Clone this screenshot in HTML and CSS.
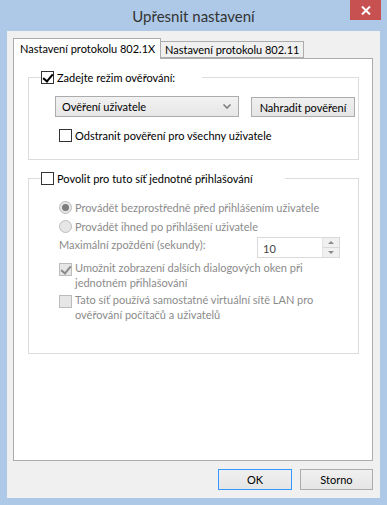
FILE: index.html
```html
<!DOCTYPE html>
<html lang="cs">
<head>
  <meta charset="UTF-8" />
  <title>Upřesnit nastavení</title>
  <link rel="stylesheet" href="styles.css">
</head>
<body>

  <div class="window">
    <div class="titlebar">
      <div class="title">Upřesnit nastavení</div>
      <button class="close-btn" title="Zavřít">
        <svg width="10" height="9" viewBox="0 0 10 9"><path d="M1 0.5 L9 8.5 M9 0.5 L1 8.5" stroke="#fff" stroke-width="2"/></svg>
      </button>
    </div>

    <div class="client">
      <div class="tabs">
        <div class="tab active">Nastavení protokolu 802.1X</div>
        <div class="tab">Nastavení protokolu 802.11</div>
      </div>

      <div class="panel">
        <fieldset class="group">
          <legend class="gap-1">
            <span class="check checked"></span>Zadejte režim ověřování:
          </legend>
          <div class="select-row">
            <div class="select">
              Ověření uživatele
              <svg class="chevron" width="8" height="5" viewBox="0 0 8 5"><path d="M0.5 0.5 L4 4 L7.5 0.5" stroke="#7a7a7a" stroke-width="1.5" fill="none"/></svg>
            </div>
            <button class="btn replace-btn">Nahradit pověření</button>
          </div>
          <div class="option after-select">
            <span class="check"></span>Odstranit pověření pro všechny uživatele
          </div>
        </fieldset>

        <fieldset class="group second">
          <legend class="gap-2">
            <span class="check"></span>Povolit pro tuto síť jednotné přihlašování
          </legend>
          <div class="option disabled first">
            <span class="radio selected"></span>Provádět bezprostředně před přihlášením uživatele
          </div>
          <div class="option disabled">
            <span class="radio"></span>Provádět ihned po přihlášení uživatele
          </div>
          <div class="delay-row disabled">
            <span class="delay-label">Maximální zpoždění (sekundy):</span>
            <div class="spinbox">
              <span class="spin-value">10</span>
              <div class="spin-btns">
                <span class="spin up"></span>
                <span class="spin down"></span>
              </div>
            </div>
          </div>
          <div class="option disabled multi">
            <span class="check checked"></span>
            <span>Umožnit zobrazení dalších dialogových oken při<br>jednotném přihlašování</span>
          </div>
          <div class="option disabled multi">
            <span class="check"></span>
            <span>Tato síť používá samostatné virtuální sítě LAN pro<br>ověřování počítačů a uživatelů</span>
          </div>
        </fieldset>
      </div>

      <div class="actions">
        <button class="btn default">OK</button>
        <button class="btn">Storno</button>
      </div>
    </div>
  </div>

</body>
</html>
```
FILE: styles.css
```css
* {
  box-sizing: border-box;
}

body {
  margin: 0;
  font-family: Lato, 'Noto Sans', sans-serif;
  font-size: 11px;
  color: #000;
  background: #adc9e7;
}

.window {
  width: 387px;
  height: 505px;
  display: flex;
  flex-direction: column;
}

.titlebar {
  height: 31px;
  display: grid;
  grid-template-columns: 1fr auto 1fr;
}

.title {
  grid-column: 2;
  font-size: 15px;
  color: #333;
  line-height: 31px;
  padding-top: 1px;
}

.close-btn {
  grid-column: 3;
  justify-self: end;
  align-self: start;
  width: 31px;
  height: 20px;
  margin-right: 6px;
  border: none;
  padding: 0;
  background: #c75050;
  display: flex;
  justify-content: center;
  align-items: center;
}

.client {
  height: 467px;
  margin: 0 7px;
  background: #f0f0f0;
  padding: 7px 7px 8px 6px;
  display: flex;
  flex-direction: column;
}

/* tabs */

.tabs {
  display: flex;
  align-items: flex-start;
  height: 20px;
  position: relative;
  z-index: 1;
}

.tab {
  height: 17px;
  margin-top: 3px;
  padding: 0 4px;
  line-height: 16px;
  background: #f0f0f0;
  border: 1px solid #acacac;
  border-left: none;
  white-space: nowrap;
}

.tab.active {
  height: 21px;
  margin-top: 0;
  width: 148px;
  padding: 0 6px;
  line-height: 20px;
  background: #fff;
  border-left: 1px solid #acacac;
  border-bottom: none;
}

.panel {
  flex: 1;
  background: #fff;
  border: 1px solid #acacac;
  padding: 0 13px 0 14px;
}

/* group boxes */

.group {
  margin: 11px 0 0;
  padding: 0 0 16px 26px;
  border: 1px solid #dcdcdc;
  min-width: 0;
}

.group.second {
  margin-top: 11px;
  padding-bottom: 31px;
}

.group legend {
  margin-left: -14px;
  padding: 0;
  line-height: 15px;
  display: flex;
  align-items: center;
}

.group legend.gap-1 {
  padding-right: 27px;
}

.group legend.gap-2 {
  padding-right: 32px;
}

.check,
.radio {
  flex: none;
  width: 13px;
  height: 13px;
  margin-right: 3px;
  border: 1px solid #333;
  background: #fff;
  display: inline-block;
  position: relative;
}

.check.checked::after {
  content: '';
  position: absolute;
  left: 3px;
  top: 0px;
  width: 4px;
  height: 8px;
  border: solid #000;
  border-width: 0 2px 2px 0;
  transform: rotate(40deg);
}

.radio {
  border-radius: 50%;
}

.disabled {
  color: #8b8b8b;
}

.disabled .check,
.disabled .radio {
  border-color: #bcbcbc;
  background: #e6e6e6;
}

.disabled .check.checked::after {
  border-color: #8b8b8b;
}

.radio.selected::after {
  content: '';
  position: absolute;
  left: 2px;
  top: 2px;
  width: 7px;
  height: 7px;
  border-radius: 50%;
  background: #7c7c7c;
}

/* first group content */

.select-row {
  display: flex;
  align-items: flex-start;
  gap: 12px;
  margin-top: 11px;
}

.select {
  width: 184px;
  height: 21px;
  padding: 0 6px;
  border: 1px solid #acacac;
  background: linear-gradient(#f2f2f2, #e6e6e6);
  display: flex;
  align-items: center;
  justify-content: space-between;
}

.chevron {
  margin-right: 1px;
}

.btn {
  font: inherit;
  color: #000;
  height: 21px;
  padding: 0;
  border: 1px solid #acacac;
  background: linear-gradient(#f0f0f0, #e5e5e5);
}

.replace-btn {
  width: 104px;
  margin-top: 1px;
  height: 20px;
}

.option {
  display: flex;
  align-items: center;
  line-height: 15px;
  margin-top: 4px;
  padding-left: 4px;
}

.option.after-select {
  margin-top: 11px;
}

.option.first {
  margin-top: 14px;
}

.option.multi {
  align-items: flex-start;
  margin-top: 2px;
}

.option.multi .check {
  margin-top: 3px;
}

/* delay spinner */

.delay-row {
  display: flex;
  align-items: flex-start;
  margin-top: 3px;
  padding-left: 4px;
}

.delay-label {
  width: 198px;
  line-height: 15px;
}

.spinbox {
  width: 83px;
  height: 21px;
  border: 1px solid #d9d9d9;
  display: flex;
  align-items: center;
  justify-content: space-between;
  color: #000;
}

.spin-value {
  padding-left: 5px;
  color: #444;
  padding-top: 1px;
}

.spin-btns {
  width: 17px;
  height: 19px;
  display: flex;
  flex-direction: column;
  border-left: 1px solid #e3e3e3;
  background: #f0f0f0;
}

.spin {
  flex: 1;
  display: flex;
  justify-content: center;
  align-items: center;
}

.spin.up {
  border-bottom: 1px solid #d9d9d9;
}

.spin::after {
  content: '';
  border-left: 3px solid transparent;
  border-right: 3px solid transparent;
}

.spin.up::after {
  border-bottom: 3px solid #8b8b8b;
}

.spin.down::after {
  border-top: 3px solid #8b8b8b;
}

/* bottom buttons */

.actions {
  display: flex;
  justify-content: flex-end;
  gap: 8px;
  margin-top: 8px;
}

.actions .btn {
  width: 73px;
}

.actions .btn.default {
  width: 74px;
  border-color: #3399ff;
}
```
